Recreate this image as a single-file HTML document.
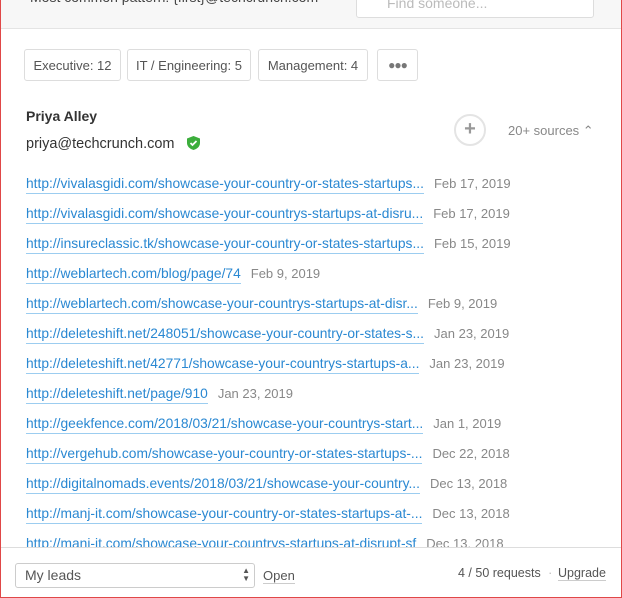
<!DOCTYPE html><html><head><style>
*{box-sizing:border-box;margin:0;padding:0}
body{width:622px;height:598px;overflow:hidden;font-family:"Liberation Sans",sans-serif;background:#fff;position:relative}
.frame{position:absolute;inset:0;border:1px solid #e04848;border-top:none;pointer-events:none;z-index:10}
.hdr{position:absolute;left:0;top:0;width:622px;height:29px;background:#f7f7f7;border-bottom:1px solid #e4e4e4}
.hdr .t{position:absolute;left:30px;top:-11px;font-size:14px;color:#444}
.hdr .s{position:absolute;left:356px;top:-4px;width:238px;height:22px;background:#fff;border:1px solid #ddd;border-radius:3px;font-size:14px;color:#bbb;padding:0 0 0 30px;line-height:12px}
.tag{position:absolute;top:49px;height:32px;border:1px solid #ddd;border-radius:3px;font-size:13px;color:#555;line-height:31px;text-align:center}
.name{position:absolute;left:26px;top:108px;font-size:14px;font-weight:bold;color:#333}
.mail{position:absolute;left:26px;top:136px;font-size:14.5px;color:#333}
.plus{position:absolute;left:454px;top:114px;width:32px;height:32px;border-radius:50%;border:2px solid #e4e4e4;color:#999;font-size:20px;font-weight:bold;text-align:center;line-height:27px}
.src{position:absolute;left:508px;top:123px;font-size:13px;color:#888}
.row{position:absolute;left:26px;font-size:13px;white-space:nowrap}
.row a{color:#2a88d2;text-decoration:none;border-bottom:1px solid #9ccdf0;padding-bottom:2px;font-size:13.8px}
.row span{color:#888;margin-left:10px}
.ftr{position:absolute;left:0;top:547px;width:622px;height:51px;background:#fff;border-top:1px solid #ddd}
.sel{position:absolute;left:15px;top:15px;width:240px;height:25px;border:1px solid #ccc;border-radius:3px;font-size:14px;color:#555;padding-left:9px;line-height:23px}
.sel i{position:absolute;right:4px;top:3px;font-style:normal;font-size:8px;line-height:8px;color:#555}
.open{position:absolute;left:263px;top:20px;font-size:13px;color:#555;border-bottom:1px solid #ccc}
.req{position:absolute;left:458px;top:18px;font-size:12.5px;color:#555}
.up{position:absolute;left:558px;top:18px;font-size:12.5px;color:#555;border-bottom:1px solid #ccc}
</style></head><body>
<div class="hdr"><div class="t">Most common pattern: {first}@techcrunch.com</div><div class="s">Find someone...</div></div>
<div class="tag" style="left:24px;width:97px">Executive: 12</div>
<div class="tag" style="left:127px;width:124px">IT / Engineering: 5</div>
<div class="tag" style="left:258px;width:110px">Management: 4</div>
<div class="tag" style="left:377px;width:41px;font-size:12px;letter-spacing:-1px;color:#777;line-height:30px">●●●</div>
<div class="name">Priya Alley</div>
<div class="mail">priya@techcrunch.com <svg width="13" height="14" viewBox="0 0 13 14" style="margin-left:8px;vertical-align:-2px"><path d="M6.5 0L13 2.5V7C13 10.5 10 13 6.5 14 3 13 0 10.5 0 7V2.5Z" fill="#3cae3c"/><path d="M3.5 7l2 2 4-4" stroke="#fff" stroke-width="1.8" fill="none"/></svg></div>
<div class="plus">+</div>
<div class="src">20+ sources &#8963;</div>
<div class="row" style="top:176px"><a>http://vivalasgidi.com/showcase-your-country-or-states-startups...</a><span>Feb 17, 2019</span></div>
<div class="row" style="top:206px"><a>http://vivalasgidi.com/showcase-your-countrys-startups-at-disru...</a><span>Feb 17, 2019</span></div>
<div class="row" style="top:236px"><a>http://insureclassic.tk/showcase-your-country-or-states-startups...</a><span>Feb 15, 2019</span></div>
<div class="row" style="top:266px"><a>http://weblartech.com/blog/page/74</a><span>Feb 9, 2019</span></div>
<div class="row" style="top:296px"><a>http://weblartech.com/showcase-your-countrys-startups-at-disr...</a><span>Feb 9, 2019</span></div>
<div class="row" style="top:326px"><a>http://deleteshift.net/248051/showcase-your-country-or-states-s...</a><span>Jan 23, 2019</span></div>
<div class="row" style="top:356px"><a>http://deleteshift.net/42771/showcase-your-countrys-startups-a...</a><span>Jan 23, 2019</span></div>
<div class="row" style="top:386px"><a>http://deleteshift.net/page/910</a><span>Jan 23, 2019</span></div>
<div class="row" style="top:416px"><a>http://geekfence.com/2018/03/21/showcase-your-countrys-start...</a><span>Jan 1, 2019</span></div>
<div class="row" style="top:446px"><a>http://vergehub.com/showcase-your-country-or-states-startups-...</a><span>Dec 22, 2018</span></div>
<div class="row" style="top:476px"><a>http://digitalnomads.events/2018/03/21/showcase-your-country...</a><span>Dec 13, 2018</span></div>
<div class="row" style="top:506px"><a>http://manj-it.com/showcase-your-country-or-states-startups-at-...</a><span>Dec 13, 2018</span></div>
<div class="row" style="top:536px"><a>http://manj-it.com/showcase-your-countrys-startups-at-disrupt-sf</a><span>Dec 13, 2018</span></div>
<div class="ftr"><div class="sel">My leads<i>▲<br>▼</i></div><div class="open">Open</div><div class="req">4 / 50 requests <span style="color:#bbb;margin-left:4px">·</span></div><div class="up">Upgrade</div></div>
<div class="frame"></div>
</body></html>
